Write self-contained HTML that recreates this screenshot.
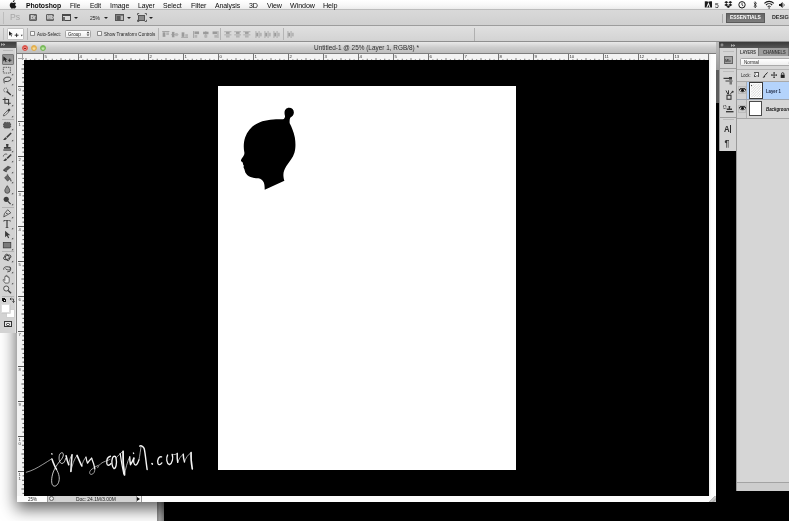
<!DOCTYPE html>
<html><head><meta charset="utf-8"><title>Photoshop</title>
<style>
*{box-sizing:border-box;margin:0;padding:0}
html,body{width:789px;height:521px;overflow:hidden;background:#000;font-family:"Liberation Sans",sans-serif;}
.abs,#root div,#root span,#root svg{position:absolute}
#root{position:relative;width:789px;height:521px;overflow:hidden;background:#000;will-change:transform}
#menubar{z-index:6;left:0;top:0;width:789px;height:10px;background:linear-gradient(#ffffff,#f8f8f8 55%,#ececec);border-bottom:1px solid #bcbcbc}
#menubar span{top:0px;font-size:8.2px;line-height:9px;color:#0a0a0a;white-space:nowrap;letter-spacing:-0.1px}
#appbar{z-index:6;left:0;top:10px;width:789px;height:16px;background:linear-gradient(#d9d9d9,#d0d0d0);border-bottom:1px solid #9d9d9d}
#optbar{z-index:6;left:0;top:26px;width:789px;height:16px;background:linear-gradient(#e0e0e0,#d3d3d3);border-bottom:1px solid #8f8f8f}
#optbar span{font-size:5.2px;line-height:6px;color:#222;white-space:nowrap;top:31px}
#deskleft{left:0;top:42px;width:160px;height:479px;background:#fff}
#win{left:17px;top:42px;width:698.6px;height:460px;background:#000;box-shadow:0 6px 15px 1px rgba(0,0,0,.62)}
#title{left:0;top:0;width:698.6px;height:11.5px;background:linear-gradient(#e9e9e9,#cdcdcd 50%,#bdbdbd);border-bottom:1px solid #7d7d7d}
#title span{left:0;width:700px;text-align:center;top:2.2px;font-size:6.3px;line-height:7px;color:#333}
#hruler{left:0;top:11.5px;width:692px;height:6.5px;background-color:#f3f3f3}
#vruler{left:0;top:18px;width:7px;height:435.5px;background-color:#f3f3f3}
#corner{left:1px;top:11.5px;width:6px;height:6.5px;background:#f3f3f3}
#canvas{left:7px;top:18px;width:685px;height:435.5px;background:#000}
#doc{left:194px;top:26px;width:298px;height:384.4px;background:#fff}
#vscroll{left:692px;top:11.5px;width:6.6px;height:448.5px;background:linear-gradient(90deg,#eee,#fdfdfd 30%,#fff)}
#status{left:0;top:453.5px;width:698.6px;height:6.5px;background:#fcfcfc}
#status span{font-size:4.8px;line-height:6px;top:0.6px;color:#222;white-space:nowrap}
#tools{z-index:5;left:0;top:42px;width:16.3px;height:291px;background:#d3d3d3;border-right:1px solid #e2e2e2;box-shadow:1px 0 0 #808080}
#toolshead{left:0;top:0;width:16.3px;height:5.5px;background:linear-gradient(#3c3c3c,#585858)}
#rpanel{z-index:5;left:718.6px;top:42.4px;width:71px;height:449px;}
#rhead{left:0;top:0;width:71px;height:5.6px;background:linear-gradient(#3a3a3a,#565656)}
#icons{left:0;top:5.6px;width:17px;height:103px;background:#d4d4d4;border-left:1px solid #9c9c9c}
#layers{left:17.4px;top:5.6px;width:54px;height:443.4px;background:#d6d6d6;border-left:1px solid #9a9a9a}
.sep{background:#a8a8a8;height:1px}
</style></head><body>
<div id="root">
<div id="deskleft"></div>
<div style="left:157px;top:502px;width:7px;height:19px;background:linear-gradient(90deg,#8a8a8a,#a5a5a5 40%,#7c7c7c)"></div>
<div id="menubar">
<svg style="left:9.3px;top:0.2px" width="8" height="9.4" viewBox="0 0 16 19"><path fill="#1a1a1a" d="M11.2 0.2c0.1 1-0.3 2-0.9 2.7-0.6 0.8-1.6 1.3-2.6 1.300-0.100-1 0.400-2 0.900-2.600 0.700-0.800 1.800-1.300 2.600-1.400zM14.300 6.500c-0.200 0.100-1.900 1.100-1.900 3.200 0 2.500 2.200 3.400 2.200 3.400 0 0.100-0.300 1.200-1.100 2.300-0.700 1-1.400 2-2.500 2-1.100 0-1.400-0.600-2.700-0.600-1.200 0-1.600 0.600-2.600 0.700-1.100 0-1.900-1.100-2.600-2.100C1.700 13.400 0.600 9.900 2.100 7.400c0.700-1.300 2-2 3.400-2.100 1.100 0 2.100 0.700 2.700 0.700 0.600 0 1.900-0.900 3.200-0.800 0.500 0 2.100 0.200 3 1.600z"/></svg>
<span style="left:26.00px;top:1.00px;font-size:8.10px;line-height:9.10px;white-space:nowrap;transform-origin:0 0;transform:scaleX(0.846);color:#0a0a0a;font-weight:bold;">Photoshop</span>
<span style="left:70.30px;top:1.00px;font-size:8.10px;line-height:9.10px;white-space:nowrap;transform-origin:0 0;transform:scaleX(0.814);color:#0a0a0a;">File</span>
<span style="left:89.60px;top:1.00px;font-size:8.10px;line-height:9.10px;white-space:nowrap;transform-origin:0 0;transform:scaleX(0.812);color:#0a0a0a;">Edit</span>
<span style="left:110.00px;top:1.00px;font-size:8.10px;line-height:9.10px;white-space:nowrap;transform-origin:0 0;transform:scaleX(0.877);color:#0a0a0a;">Image</span>
<span style="left:138.00px;top:1.00px;font-size:8.10px;line-height:9.10px;white-space:nowrap;transform-origin:0 0;transform:scaleX(0.846);color:#0a0a0a;">Layer</span>
<span style="left:163.00px;top:1.00px;font-size:8.10px;line-height:9.10px;white-space:nowrap;transform-origin:0 0;transform:scaleX(0.849);color:#0a0a0a;">Select</span>
<span style="left:190.60px;top:1.00px;font-size:8.10px;line-height:9.10px;white-space:nowrap;transform-origin:0 0;transform:scaleX(0.886);color:#0a0a0a;">Filter</span>
<span style="left:215.20px;top:1.00px;font-size:8.10px;line-height:9.10px;white-space:nowrap;transform-origin:0 0;transform:scaleX(0.855);color:#0a0a0a;">Analysis</span>
<span style="left:249.40px;top:1.00px;font-size:8.10px;line-height:9.10px;white-space:nowrap;transform-origin:0 0;transform:scaleX(0.876);color:#0a0a0a;">3D</span>
<span style="left:267.00px;top:1.00px;font-size:8.10px;line-height:9.10px;white-space:nowrap;transform-origin:0 0;transform:scaleX(0.876);color:#0a0a0a;">View</span>
<span style="left:290.00px;top:1.00px;font-size:8.10px;line-height:9.10px;white-space:nowrap;transform-origin:0 0;transform:scaleX(0.880);color:#0a0a0a;">Window</span>
<span style="left:323.30px;top:1.00px;font-size:8.10px;line-height:9.10px;white-space:nowrap;transform-origin:0 0;transform:scaleX(0.892);color:#0a0a0a;">Help</span>
<span style="left:714.80px;top:1.00px;font-size:8.10px;line-height:9.10px;white-space:nowrap;transform-origin:0 0;transform:scaleX(0.840);color:#222;">5</span>
<svg style="left:700px;top:0" width="89" height="10" viewBox="0 0 89 10">
<rect x="4.800" y="1.300" width="7.200" height="6.200" fill="#1a1a1a"/><path d="M6.300 7.500l2.100-5.400 2.100 5.400h-1.100l-1-2.800-1 2.800z" fill="#f4f4f4"/><path d="M6.900 1.300h3l-1.500 0.600z" fill="#f4f4f4"/>
<path fill="#1a1a1a" d="M26.300 1l2 1.300-2 1.300-2-1.300zM30.300 1l2 1.300-2 1.300-2-1.300zM24.300 4.900l2-1.300 2 1.300-2 1.300zM30.300 3.600l2 1.300-2 1.300-2-1.300zM26.300 6.800l2-1.300 2 1.300-2 1.300z"/>
<circle cx="42" cy="4.800" r="3.200" fill="none" stroke="#1a1a1a" stroke-width="1"/><path d="M42 2.800v2.200l1.300 0.900" stroke="#1a1a1a" stroke-width="0.800" fill="none"/>
<path d="M54 2.800l2.400 3.400-1.300 1.700v-6.200l1.300 1.700-2.400 3.400" stroke="#1a1a1a" stroke-width="0.700" fill="none"/>
<path d="M64.400 3.300a6.800 6.800 0 0 1 9.400 0" stroke="#1a1a1a" stroke-width="1.100" fill="none"/><path d="M66 5a4.500 4.500 0 0 1 6.200 0" stroke="#1a1a1a" stroke-width="1.100" fill="none"/><path d="M67.600 6.600a2.300 2.300 0 0 1 3 0" stroke="#1a1a1a" stroke-width="1" fill="none"/><circle cx="69.100" cy="8" r="0.700" fill="#1a1a1a"/>
<path fill="#1a1a1a" d="M79 3.900h1.400l2.200-1.900v6l-2.200-1.900h-1.400z"/><path d="M83.600 3.600a2 2 0 0 1 0 2.800" stroke="#1a1a1a" stroke-width="0.700" fill="none"/>
</svg>
</div>
<div id="appbar">
<div style="left:2.5px;top:2px;width:1px;height:12px;background:#bdbdbd"></div>
<span style="left:9.90px;top:3.30px;font-size:8.60px;line-height:9.60px;white-space:nowrap;transform-origin:0 0;transform:scaleX(1.007);color:#a6a6a6;">Ps</span>
<div style="left:29.2px;top:3.8px;width:8px;height:7.4px;background:#7c7c7c;border:1px solid #5f5f5f;border-radius:1px"></div>
<span style="left:30.7px;top:5px;font-size:4.6px;line-height:5px;color:#e4e4e4;font-weight:bold">Br</span>
<div style="left:45.6px;top:3.8px;width:8px;height:7.4px;background:#7c7c7c;border:1px solid #5f5f5f;border-radius:1px"></div>
<span style="left:47.1px;top:5px;font-size:4.6px;line-height:5px;color:#e4e4e4;font-weight:bold">Mb</span>
<div style="left:62.2px;top:3.9px;width:8.6px;height:7.6px;border:1px solid #4a4a4a;border-top:2.2px solid #4a4a4a;background:#d9d9d9"></div>
<div style="left:63.2px;top:7px;width:2.2px;height:3.5px;background:#6a6a6a"></div>
<div style="left:73.8px;top:7.0px;width:0;height:0;border-left:2.1px solid transparent;border-right:2.1px solid transparent;border-top:2.7px solid #222"></div>
<span style="left:89.80px;top:4.60px;font-size:5.90px;line-height:6.90px;white-space:nowrap;transform-origin:0 0;transform:scaleX(0.848);color:#222;">25%</span>
<div style="left:103.6px;top:7.0px;width:0;height:0;border-left:2.1px solid transparent;border-right:2.1px solid transparent;border-top:2.7px solid #222"></div>
<div style="left:115.2px;top:4px;width:8.6px;height:7.4px;background:#7e7e7e;border:1px solid #555"></div>
<div style="left:117px;top:6px;width:3.4px;height:3.6px;background:#5a5a5a"></div><div style="left:121.200px;top:5.500px;width:1.500px;height:4.500px;background:#bbb"></div>
<div style="left:126.5px;top:7.0px;width:0;height:0;border-left:2.1px solid transparent;border-right:2.1px solid transparent;border-top:2.7px solid #222"></div>
<div style="left:138.2px;top:4.6px;width:7px;height:6px;background:#8a8a8a;border:1px solid #555"></div>
<svg style="left:136.8px;top:3.4px" width="10" height="9" viewBox="0 0 10 9"><path d="M0.500 2.200v-1.700h1.700M7.800 0.500h1.700v1.700M9.500 6.800v1.700h-1.700M2.200 8.500h-1.700v-1.700" stroke="#444" stroke-width="0.800" fill="none"/></svg>
<div style="left:148.8px;top:7.0px;width:0;height:0;border-left:2.1px solid transparent;border-right:2.1px solid transparent;border-top:2.7px solid #222"></div>
<div style="left:722px;top:3.6px;width:1px;height:9px;background:#aaa"></div>
<div style="left:726px;top:3.2px;width:39px;height:9.8px;background:linear-gradient(#646464,#7d7d7d);border:1px solid #5b5b5b"></div>
<span style="left:730.20px;top:5.20px;font-size:4.90px;line-height:5.90px;white-space:nowrap;transform-origin:0 0;transform:scaleX(1.003);color:#fff;font-weight:bold;">ESSENTIALS</span>
<span style="left:772.00px;top:5.20px;font-size:4.90px;line-height:5.90px;white-space:nowrap;transform-origin:0 0;transform:scaleX(1.092);color:#2a2a2a;font-weight:bold;">DESIGN</span>
</div>
<div id="optbar">
<div style="left:2.5px;top:2px;width:1px;height:12px;background:#bdbdbd"></div>
<div style="left:6.5px;top:2.4px;width:17px;height:11.4px;background:#fdfdfd;border:1px solid #c2c2c2;border-radius:1px"></div>
</div>
<div style="left:0;top:0;width:789px;height:42px;z-index:7">
<svg style="left:8px;top:30px" width="16" height="9" viewBox="0 0 16 9"><path d="M1 1.200v4.600l1.300-1.200 0.900 2 0.800-0.400-0.900-1.900h1.800z" fill="#222"/><path d="M6.700 5.200h3.800M8.600 3.300v3.800" stroke="#222" stroke-width="0.900"/><path d="M12.800 4.700h1.900l-0.950 1.700z" fill="#333"/></svg>
<div style="left:27px;top:28px;width:1px;height:12px;background:#b5b5b5"></div>
<div style="left:30.4px;top:31.2px;width:5px;height:5.2px;background:linear-gradient(#fff,#eee);border:0.7px solid #8c8c8c;border-radius:0.8px"></div>
<span style="left:36.50px;top:31.20px;font-size:5.20px;line-height:6.20px;white-space:nowrap;transform-origin:0 0;transform:scaleX(0.849);color:#222;">Auto-Select:</span>
<div style="left:64.6px;top:29.8px;width:26.6px;height:8px;background:linear-gradient(#fff,#ededed);border:0.8px solid #a6a6a6;border-radius:1.5px"></div>
<span style="left:67.80px;top:31.00px;font-size:5.20px;line-height:6.20px;white-space:nowrap;transform-origin:0 0;transform:scaleX(0.894);color:#222;">Group</span>
<svg style="left:85.6px;top:31.2px" width="4" height="6" viewBox="0 0 4 6"><path d="M0.600 2.200l1.400-1.700 1.400 1.700zM0.600 3.400l1.400 1.700 1.400-1.700z" fill="#333"/></svg>
<div style="left:96.8px;top:31.2px;width:5px;height:5.2px;background:linear-gradient(#fff,#eee);border:0.7px solid #8c8c8c;border-radius:0.8px"></div>
<span style="left:103.80px;top:31.20px;font-size:5.20px;line-height:6.20px;white-space:nowrap;transform-origin:0 0;transform:scaleX(0.876);color:#222;">Show Transform Controls</span>
<div style="left:158.4px;top:28px;width:1px;height:12px;background:#b5b5b5"></div>
<svg style="left:162.0px;top:30.8px" width="7.600" height="7.200" viewBox="0 0 8 8"><path d="M0 0.500h8" stroke="#9b9b9b"/><rect x="0.500" y="1.500" width="3" height="5" fill="#9b9b9b"/><rect x="4.500" y="1.500" width="3" height="3" fill="#b4b4b4"/></svg>
<svg style="left:171.3px;top:30.8px" width="7.600" height="7.200" viewBox="0 0 8 8"><path d="M0 4h8" stroke="#9b9b9b" stroke-width="0.800"/><rect x="0.800" y="1" width="2.800" height="6" fill="#9b9b9b"/><rect x="4.500" y="2.300" width="2.800" height="3.400" fill="#b4b4b4"/></svg>
<svg style="left:180.5px;top:30.8px" width="7.600" height="7.200" viewBox="0 0 8 8"><path d="M0 7.500h8" stroke="#9b9b9b"/><rect x="0.500" y="1.500" width="3" height="5" fill="#9b9b9b"/><rect x="4.500" y="3.500" width="3" height="3" fill="#b4b4b4"/></svg>
<svg style="left:192.5px;top:30.8px" width="7.600" height="7.200" viewBox="0 0 8 8"><path d="M0.500 0v8" stroke="#9b9b9b"/><rect x="1.500" y="0.500" width="5" height="3" fill="#9b9b9b"/><rect x="1.500" y="4.500" width="3" height="3" fill="#b4b4b4"/></svg>
<svg style="left:201.8px;top:30.8px" width="7.600" height="7.200" viewBox="0 0 8 8"><path d="M4 0v8" stroke="#9b9b9b" stroke-width="0.800"/><rect x="1" y="0.800" width="6" height="2.800" fill="#9b9b9b"/><rect x="2.300" y="4.500" width="3.400" height="2.800" fill="#b4b4b4"/></svg>
<svg style="left:211.2px;top:30.8px" width="7.600" height="7.200" viewBox="0 0 8 8"><path d="M7.500 0v8" stroke="#9b9b9b"/><rect x="1.500" y="0.500" width="5" height="3" fill="#9b9b9b"/><rect x="3.500" y="4.500" width="3" height="3" fill="#b4b4b4"/></svg>
<div style="left:220.3px;top:28px;width:1px;height:12px;background:#b5b5b5"></div>
<svg style="left:224.4px;top:30.8px" width="7.600" height="7.200" viewBox="0 0 8 8"><path d="M0 0.800h8M0 4.300h8" stroke="#9b9b9b" stroke-width="0.800"/><rect x="2" y="1.200" width="4" height="2" fill="#9b9b9b"/><rect x="2" y="4.800" width="4" height="2.500" fill="#b4b4b4"/></svg>
<svg style="left:233.7px;top:30.8px" width="7.600" height="7.200" viewBox="0 0 8 8"><path d="M0 0.800h8M0 4.300h8" stroke="#9b9b9b" stroke-width="0.800"/><rect x="2" y="1.200" width="4" height="2" fill="#9b9b9b"/><rect x="2" y="4.800" width="4" height="2.500" fill="#b4b4b4"/></svg>
<svg style="left:243.0px;top:30.8px" width="7.600" height="7.200" viewBox="0 0 8 8"><path d="M0 0.800h8M0 4.300h8" stroke="#9b9b9b" stroke-width="0.800"/><rect x="2" y="1.200" width="4" height="2" fill="#9b9b9b"/><rect x="2" y="4.800" width="4" height="2.500" fill="#b4b4b4"/></svg>
<svg style="left:254.5px;top:30.8px" width="7.600" height="7.200" viewBox="0 0 8 8"><path d="M0.800 0v8M4.300 0v8" stroke="#9b9b9b" stroke-width="0.800"/><rect x="1.200" y="2" width="2" height="4" fill="#9b9b9b"/><rect x="4.800" y="2" width="2.500" height="4" fill="#b4b4b4"/></svg>
<svg style="left:263.8px;top:30.8px" width="7.600" height="7.200" viewBox="0 0 8 8"><path d="M0.800 0v8M4.300 0v8" stroke="#9b9b9b" stroke-width="0.800"/><rect x="1.200" y="2" width="2" height="4" fill="#9b9b9b"/><rect x="4.800" y="2" width="2.500" height="4" fill="#b4b4b4"/></svg>
<svg style="left:273.0px;top:30.8px" width="7.600" height="7.200" viewBox="0 0 8 8"><path d="M0.800 0v8M4.300 0v8" stroke="#9b9b9b" stroke-width="0.800"/><rect x="1.200" y="2" width="2" height="4" fill="#9b9b9b"/><rect x="4.800" y="2" width="2.500" height="4" fill="#b4b4b4"/></svg>
<div style="left:283.4px;top:28px;width:1px;height:12px;background:#b5b5b5"></div>
<svg style="left:287.0px;top:30.8px" width="7.600" height="7.200" viewBox="0 0 8 8"><path d="M0.800 0v8M4.300 0v8" stroke="#9b9b9b" stroke-width="0.800"/><rect x="1.200" y="2" width="2" height="4" fill="#9b9b9b"/><rect x="4.800" y="2" width="2.500" height="4" fill="#b4b4b4"/></svg>
<div style="left:474px;top:27.5px;width:1px;height:13px;background:#b0b0b0"></div>
</div>
<div id="win">
<div id="title"></div>
<span style="left:296.70px;top:2.00px;font-size:6.70px;line-height:7.70px;white-space:nowrap;transform-origin:0 0;transform:scaleX(0.960);color:#2c2c2c;">Untitled-1 @ 25% (Layer 1, RGB/8) *</span>
<div style="left:4.65px;top:3.1px;width:6.4px;height:6.4px;border-radius:50%;background:radial-gradient(circle at 50% 70%,#ffb4ac 0,#dc5248 75%);border:0.6px solid #dc5248"></div>
<div style="left:13.86px;top:3.1px;width:6.4px;height:6.4px;border-radius:50%;background:radial-gradient(circle at 50% 70%,#ffeab0 0,#e3ad48 75%);border:0.6px solid #e3ad48"></div>
<div style="left:23.07px;top:3.1px;width:6.4px;height:6.4px;border-radius:50%;background:radial-gradient(circle at 50% 70%,#d6f9be 0,#74b855 75%);border:0.6px solid #74b855"></div>
<div style="left:6.8px;top:5.5px;width:2.2px;height:1.6px;background:#7a1010;border-radius:50%"></div>
<div id="hruler"></div><div id="vruler"></div>
<svg style="left:7px;top:11.5px" width="685" height="6.5" viewBox="0 0 685 6.5"><path d="M2.00 6.5v-2.4M6.38 6.5v-1.2M10.75 6.5v-1.8M15.12 6.5v-1.2M19.50 6.5v-6.5M23.88 6.5v-1.2M28.25 6.5v-1.8M32.62 6.5v-1.2M37.00 6.5v-2.4M41.38 6.5v-1.2M45.75 6.5v-1.8M50.12 6.5v-1.2M54.50 6.5v-6.5M58.88 6.5v-1.2M63.25 6.5v-1.8M67.62 6.5v-1.2M72.00 6.5v-2.4M76.38 6.5v-1.2M80.75 6.5v-1.8M85.12 6.5v-1.2M89.50 6.5v-6.5M93.88 6.5v-1.2M98.25 6.5v-1.8M102.62 6.5v-1.2M107.00 6.5v-2.4M111.38 6.5v-1.2M115.75 6.5v-1.8M120.12 6.5v-1.2M124.50 6.5v-6.5M128.88 6.5v-1.2M133.25 6.5v-1.8M137.62 6.5v-1.2M142.00 6.5v-2.4M146.38 6.5v-1.2M150.75 6.5v-1.8M155.12 6.5v-1.2M159.50 6.5v-6.5M163.88 6.5v-1.2M168.25 6.5v-1.8M172.62 6.5v-1.2M177.00 6.5v-2.4M181.38 6.5v-1.2M185.75 6.5v-1.8M190.12 6.5v-1.2M194.50 6.5v-6.5M198.88 6.5v-1.2M203.25 6.5v-1.8M207.62 6.5v-1.2M212.00 6.5v-2.4M216.38 6.5v-1.2M220.75 6.5v-1.8M225.12 6.5v-1.2M229.50 6.5v-6.5M233.88 6.5v-1.2M238.25 6.5v-1.8M242.62 6.5v-1.2M247.00 6.5v-2.4M251.38 6.5v-1.2M255.75 6.5v-1.8M260.12 6.5v-1.2M264.50 6.5v-6.5M268.88 6.5v-1.2M273.25 6.5v-1.8M277.62 6.5v-1.2M282.00 6.5v-2.4M286.38 6.5v-1.2M290.75 6.5v-1.8M295.12 6.5v-1.2M299.50 6.5v-6.5M303.88 6.5v-1.2M308.25 6.5v-1.8M312.62 6.5v-1.2M317.00 6.5v-2.4M321.38 6.5v-1.2M325.75 6.5v-1.8M330.12 6.5v-1.2M334.50 6.5v-6.5M338.88 6.5v-1.2M343.25 6.5v-1.8M347.62 6.5v-1.2M352.00 6.5v-2.4M356.38 6.5v-1.2M360.75 6.5v-1.8M365.12 6.5v-1.2M369.50 6.5v-6.5M373.88 6.5v-1.2M378.25 6.5v-1.8M382.62 6.5v-1.2M387.00 6.5v-2.4M391.38 6.5v-1.2M395.75 6.5v-1.8M400.12 6.5v-1.2M404.50 6.5v-6.5M408.88 6.5v-1.2M413.25 6.5v-1.8M417.62 6.5v-1.2M422.00 6.5v-2.4M426.38 6.5v-1.2M430.75 6.5v-1.8M435.12 6.5v-1.2M439.50 6.5v-6.5M443.88 6.5v-1.2M448.25 6.5v-1.8M452.62 6.5v-1.2M457.00 6.5v-2.4M461.38 6.5v-1.2M465.75 6.5v-1.8M470.12 6.5v-1.2M474.50 6.5v-6.5M478.88 6.5v-1.2M483.25 6.5v-1.8M487.62 6.5v-1.2M492.00 6.5v-2.4M496.38 6.5v-1.2M500.75 6.5v-1.8M505.12 6.5v-1.2M509.50 6.5v-6.5M513.88 6.5v-1.2M518.25 6.5v-1.8M522.62 6.5v-1.2M527.00 6.5v-2.4M531.38 6.5v-1.2M535.75 6.5v-1.8M540.12 6.5v-1.2M544.50 6.5v-6.5M548.88 6.5v-1.2M553.25 6.5v-1.8M557.62 6.5v-1.2M562.00 6.5v-2.4M566.38 6.5v-1.2M570.75 6.5v-1.8M575.12 6.5v-1.2M579.50 6.5v-6.5M583.88 6.5v-1.2M588.25 6.5v-1.8M592.62 6.5v-1.2M597.00 6.5v-2.4M601.38 6.5v-1.2M605.75 6.5v-1.8M610.12 6.5v-1.2M614.50 6.5v-6.5M618.88 6.5v-1.2M623.25 6.5v-1.8M627.62 6.5v-1.2M632.00 6.5v-2.4M636.38 6.5v-1.2M640.75 6.5v-1.8M645.12 6.5v-1.2M649.50 6.5v-6.5M653.88 6.5v-1.2M658.25 6.5v-1.8M662.62 6.5v-1.2M667.00 6.5v-2.4M671.38 6.5v-1.2M675.75 6.5v-1.8M680.12 6.5v-1.2M684.50 6.5v-6.5" stroke="#555" stroke-width="0.8" fill="none"/>
<text x="20.4" y="4.300" font-size="4.400" font-family="Liberation Sans" fill="#333">5</text>
<text x="55.4" y="4.300" font-size="4.400" font-family="Liberation Sans" fill="#333">4</text>
<text x="90.4" y="4.300" font-size="4.400" font-family="Liberation Sans" fill="#333">3</text>
<text x="125.4" y="4.300" font-size="4.400" font-family="Liberation Sans" fill="#333">2</text>
<text x="160.4" y="4.300" font-size="4.400" font-family="Liberation Sans" fill="#333">1</text>
<text x="195.4" y="4.300" font-size="4.400" font-family="Liberation Sans" fill="#333">0</text>
<text x="230.4" y="4.300" font-size="4.400" font-family="Liberation Sans" fill="#333">1</text>
<text x="265.4" y="4.300" font-size="4.400" font-family="Liberation Sans" fill="#333">2</text>
<text x="300.4" y="4.300" font-size="4.400" font-family="Liberation Sans" fill="#333">3</text>
<text x="335.4" y="4.300" font-size="4.400" font-family="Liberation Sans" fill="#333">4</text>
<text x="370.4" y="4.300" font-size="4.400" font-family="Liberation Sans" fill="#333">5</text>
<text x="405.4" y="4.300" font-size="4.400" font-family="Liberation Sans" fill="#333">6</text>
<text x="440.4" y="4.300" font-size="4.400" font-family="Liberation Sans" fill="#333">7</text>
<text x="475.4" y="4.300" font-size="4.400" font-family="Liberation Sans" fill="#333">8</text>
<text x="510.4" y="4.300" font-size="4.400" font-family="Liberation Sans" fill="#333">9</text>
<text x="545.4" y="4.300" font-size="4.400" font-family="Liberation Sans" fill="#333">10</text>
<text x="580.4" y="4.300" font-size="4.400" font-family="Liberation Sans" fill="#333">11</text>
<text x="615.4" y="4.300" font-size="4.400" font-family="Liberation Sans" fill="#333">12</text>
<text x="650.4" y="4.300" font-size="4.400" font-family="Liberation Sans" fill="#333">13</text>
</svg>
<svg style="left:1px;top:18px" width="6" height="435.5" viewBox="0 0 6 435.5"><path d="M6.0 4.62h-1.5M6.0 9.00h-2.6M6.0 13.38h-1.5M6.0 17.75h-2.0M6.0 22.12h-1.5M6.0 26.50h-6.0M6.0 30.88h-1.5M6.0 35.25h-2.0M6.0 39.62h-1.5M6.0 44.00h-2.6M6.0 48.38h-1.5M6.0 52.75h-2.0M6.0 57.12h-1.5M6.0 61.50h-6.0M6.0 65.88h-1.5M6.0 70.25h-2.0M6.0 74.62h-1.5M6.0 79.00h-2.6M6.0 83.38h-1.5M6.0 87.75h-2.0M6.0 92.12h-1.5M6.0 96.50h-6.0M6.0 100.88h-1.5M6.0 105.25h-2.0M6.0 109.62h-1.5M6.0 114.00h-2.6M6.0 118.38h-1.5M6.0 122.75h-2.0M6.0 127.12h-1.5M6.0 131.50h-6.0M6.0 135.88h-1.5M6.0 140.25h-2.0M6.0 144.62h-1.5M6.0 149.00h-2.6M6.0 153.38h-1.5M6.0 157.75h-2.0M6.0 162.12h-1.5M6.0 166.50h-6.0M6.0 170.88h-1.5M6.0 175.25h-2.0M6.0 179.62h-1.5M6.0 184.00h-2.6M6.0 188.38h-1.5M6.0 192.75h-2.0M6.0 197.12h-1.5M6.0 201.50h-6.0M6.0 205.88h-1.5M6.0 210.25h-2.0M6.0 214.62h-1.5M6.0 219.00h-2.6M6.0 223.38h-1.5M6.0 227.75h-2.0M6.0 232.12h-1.5M6.0 236.50h-6.0M6.0 240.88h-1.5M6.0 245.25h-2.0M6.0 249.62h-1.5M6.0 254.00h-2.6M6.0 258.38h-1.5M6.0 262.75h-2.0M6.0 267.12h-1.5M6.0 271.50h-6.0M6.0 275.88h-1.5M6.0 280.25h-2.0M6.0 284.62h-1.5M6.0 289.00h-2.6M6.0 293.38h-1.5M6.0 297.75h-2.0M6.0 302.12h-1.5M6.0 306.50h-6.0M6.0 310.88h-1.5M6.0 315.25h-2.0M6.0 319.62h-1.5M6.0 324.00h-2.6M6.0 328.38h-1.5M6.0 332.75h-2.0M6.0 337.12h-1.5M6.0 341.50h-6.0M6.0 345.88h-1.5M6.0 350.25h-2.0M6.0 354.62h-1.5M6.0 359.00h-2.6M6.0 363.38h-1.5M6.0 367.75h-2.0M6.0 372.12h-1.5M6.0 376.50h-6.0M6.0 380.88h-1.5M6.0 385.25h-2.0M6.0 389.62h-1.5M6.0 394.00h-2.6M6.0 398.38h-1.5M6.0 402.75h-2.0M6.0 407.12h-1.5M6.0 411.50h-6.0M6.0 415.88h-1.5M6.0 420.25h-2.0M6.0 424.62h-1.5M6.0 429.00h-2.6M6.0 433.38h-1.5" stroke="#444" stroke-width="0.9" fill="none"/>
<text x="0.600" y="31.0" font-size="4.200" font-family="Liberation Sans" fill="#333">0</text>
<text x="0.600" y="66.0" font-size="4.200" font-family="Liberation Sans" fill="#333">1</text>
<text x="0.600" y="101.0" font-size="4.200" font-family="Liberation Sans" fill="#333">2</text>
<text x="0.600" y="136.0" font-size="4.200" font-family="Liberation Sans" fill="#333">3</text>
<text x="0.600" y="171.0" font-size="4.200" font-family="Liberation Sans" fill="#333">4</text>
<text x="0.600" y="206.0" font-size="4.200" font-family="Liberation Sans" fill="#333">5</text>
<text x="0.600" y="241.0" font-size="4.200" font-family="Liberation Sans" fill="#333">6</text>
<text x="0.600" y="276.0" font-size="4.200" font-family="Liberation Sans" fill="#333">7</text>
<text x="0.600" y="311.0" font-size="4.200" font-family="Liberation Sans" fill="#333">8</text>
<text x="0.600" y="346.0" font-size="4.200" font-family="Liberation Sans" fill="#333">9</text>
<text x="0.600" y="381.0" font-size="4.200" font-family="Liberation Sans" fill="#333">1</text>
<text x="0.600" y="385.0" font-size="4.200" font-family="Liberation Sans" fill="#333">0</text>
<text x="0.600" y="416.0" font-size="4.200" font-family="Liberation Sans" fill="#333">1</text>
<text x="0.600" y="420.0" font-size="4.200" font-family="Liberation Sans" fill="#333">1</text>
</svg>
<div style="left:0;top:11.5px;width:7px;height:6.5px;background:#f3f3f3"></div>
<div style="left:0.5px;top:16px;width:6.5px;height:0.8px;background:#a4a4a4"></div><div style="left:5.400px;top:11.500px;width:0.800px;height:6.500px;background:#a4a4a4"></div>
<div id="canvas"><div id="doc"></div>
<svg style="left:211px;top:40px;overflow:visible" width="70" height="95" viewBox="0 0 70 95"><path transform="scale(0.18229)" fill="#000" d="M297,43 C312,43 323,54 323,69 C323,83 313,92 303,98 C299,108 299,118 300,128 C311,150 322,175 328,205 C334,240 332,270 326,290 C318,318 296,342 282,362 C268,385 264,400 266,420 C267,432 269,438 271,443 L163,492 C163,478 162,462 158,452 C153,440 142,432 128,429 C112,429 92,427 76,418 C62,408 56,398 55,392 C54,384 51,378 47,370 C47,365 49,361 47,357 C43,354 42,350 44,345 C42,342 36,340 33,335 C31,329 38,320 44,311 C50,303 53,294 51,285 C46,262 47,232 56,205 C68,172 92,143 125,127 C155,112 200,106 240,106 C252,106 262,106 268,104 C274,98 276,92 273,82 C268,60 278,43 297,43 Z"/></svg>
<svg style="left:0;top:380px;overflow:visible" width="190" height="56" viewBox="0 0 190 56" fill="none" stroke="#f4f4f4" stroke-linecap="round" stroke-linejoin="round">
<g transform="translate(-4,0) scale(0.11407)" stroke-width="9">
<path stroke-width="5.5" d="M55,283 C100,272 150,246 200,214 C230,196 255,180 276,166"/>
<path stroke-width="12" d="M279,120 L281,124"/>
<path stroke-width="13.5" d="M280,166 C292,200 306,235 320,258"/>
<path stroke-width="7" d="M320,258 C345,300 350,340 338,372 C328,398 306,412 290,400 C272,385 274,330 292,280 C304,250 322,218 346,190 C364,170 384,145 380,124 C376,104 352,108 345,135 C338,168 346,204 368,206 C386,206 394,184 400,162"/>
<path stroke-width="13.5" d="M404,138 C410,165 418,195 427,217"/>
<path stroke-width="5.5" d="M427,217 C430,185 440,150 456,130"/>
<path stroke-width="13.5" d="M456,130 C452,175 448,230 446,276"/>
<path stroke-width="5.5" d="M446,276 C455,225 475,165 500,135"/>
<path stroke-width="13.5" d="M500,135 C515,170 530,205 542,228"/>
<path stroke-width="5.5" d="M542,228 C548,200 560,170 578,150"/>
<path stroke-width="11" d="M578,150 C582,170 586,190 592,203 C600,190 612,175 628,160"/>
<path stroke-width="11" d="M628,160 C640,190 652,225 656,252"/>
<path stroke-width="5.5" d="M656,252 C658,280 645,300 625,302 C606,300 606,280 622,262 C640,245 665,232 685,222 "/>
<path stroke-width="5.5" d="M680,243 C690,215 720,195 750,186 C765,181 778,176 789,170"/>
</g>
<g transform="translate(81,0) scale(0.12041)" stroke-width="9">
<path stroke-width="11" d="M45,135 C25,140 12,165 15,195 C18,215 35,215 50,195"/>
<path stroke-width="11" d="M62,150 C52,180 58,225 75,238 C92,235 100,190 92,150 C88,130 70,130 62,150"/>
<path stroke-width="5.5" d="M92,150 C105,135 125,110 150,95"/>
<path stroke-width="14.5" d="M150,95 C148,150 152,230 162,290"/>
<path stroke-width="10" d="M126,112 C134,170 146,235 156,282"/>
<path stroke-width="5.5" d="M162,290 C170,240 185,180 205,140"/>
<path stroke-width="12" d="M205,140 C206,165 208,190 212,205 C222,190 232,170 240,150"/>
<path stroke-width="11" d="M236,108 L238,112"/>
<path stroke-width="11" d="M240,150 C236,175 240,205 256,208 C268,206 275,185 282,165"/>
<path stroke-width="5.5" d="M282,165 C290,125 296,80 300,48"/>
<path stroke-width="12" d="M288,50 C300,42 315,52 325,70 C335,110 340,180 350,245"/>
<path stroke-width="13.5" d="M390,196 L393,200"/>
<path stroke-width="11" d="M470,140 C448,135 432,160 440,195 C446,212 462,205 472,190"/>
<path stroke-width="11" d="M520,125 C505,150 512,195 535,205 C560,195 568,150 558,120"/>
<path stroke-width="5.5" d="M558,120 C575,125 590,120 600,112"/>
<path stroke-width="12" d="M600,112 C598,140 600,165 604,185"/>
<path stroke-width="5.5" d="M604,185 C612,160 630,130 650,118"/>
<path stroke-width="12" d="M650,118 C650,140 655,165 660,182"/>
<path stroke-width="5.5" d="M660,182 C670,150 690,120 715,105"/>
<path stroke-width="13.5" d="M715,105 C712,150 718,200 725,240"/>
</g>
</svg>
</div>
<div id="vscroll"></div>
<div id="status">
<span style="left:10.50px;top:0.20px;font-size:5.30px;line-height:6.30px;white-space:nowrap;transform-origin:0 0;transform:scaleX(0.829);color:#222;">25%</span>
<div style="left:29.5px;top:0;width:9px;height:6.5px;background:#cfcfcf;border-left:0.8px solid #999"></div>
<div style="left:31.6px;top:0.800px;width:5px;height:5px;border:0.8px solid #666;border-radius:50%;background:#e8e8e8"></div>
<div style="left:38.5px;top:0;width:80px;height:6.5px;background:#d2d2d2"></div>
<span style="left:58.50px;top:0.20px;font-size:5.30px;line-height:6.30px;white-space:nowrap;transform-origin:0 0;transform:scaleX(0.920);color:#222;">Doc: 24.1M/3.00M</span>
<div style="left:118.5px;top:0;width:6.5px;height:6.5px;background:#f4f4f4;border-left:0.8px solid #999;border-right:0.8px solid #999"></div>
<div style="left:120.3px;top:1.1px;width:0;height:0;border-top:2.2px solid transparent;border-bottom:2.2px solid transparent;border-left:3.4px solid #111"></div>
<div style="left:692px;top:0;width:6.6px;height:6.5px;background:linear-gradient(135deg,#fcfcfc 45%,#bbb 46%,#ccc 60%,#aaa 75%,#ddd)"></div>
</div>
</div>
<div id="tools"><div id="toolshead"></div>
<svg style="left:1.2px;top:1.4px" width="5" height="3" viewBox="0 0 5 3"><path d="M0.300 0l1.500 1.500-1.500 1.500zM2.500 0l1.500 1.500-1.500 1.500z" fill="#ddd"/></svg>
<div style="left:3px;top:8px;width:10px;height:0.8px;background:#b9b9b9"></div>
<div style="left:1.8px;top:12px;width:12.2px;height:10.6px;background:linear-gradient(#8f8f8f,#a6a6a6);border:0.6px solid #777;border-radius:1px"></div>
<div style="left:2px;top:77.3px;width:12px;height:0.8px;background:#b3b3b3"></div>
<div style="left:2px;top:165.0px;width:12px;height:0.8px;background:#b3b3b3"></div>
<div style="left:2px;top:208.8px;width:12px;height:0.8px;background:#b3b3b3"></div>
<div style="left:2px;top:254.0px;width:12px;height:0.8px;background:#b3b3b3"></div>
<svg style="left:1.62px;top:13.30px;overflow:visible" width="10.56" height="8.80" viewBox="0 0 12 10"><path d="M1.500 1.500v5.800l1.600-1.500 1.100 2.500 1-0.500-1.100-2.400h2.200z" fill="#222"/><path d="M6.800 6h4M8.800 4v4" stroke="#222" stroke-width="1"/></svg>
<svg style="left:1.62px;top:23.90px;overflow:visible" width="10.56" height="8.80" viewBox="0 0 12 10"><rect x="1.500" y="1.500" width="8" height="6.500" fill="none" stroke="#3c3c3c" stroke-width="0.900" stroke-dasharray="1.600 1"/><path d="M10.800 10.600h1.900v-1.900z" fill="#333"/></svg>
<svg style="left:1.62px;top:34.20px;overflow:visible" width="10.56" height="8.80" viewBox="0 0 12 10"><ellipse cx="6" cy="3.800" rx="4.200" ry="2.500" fill="none" stroke="#3c3c3c" stroke-width="1" transform="rotate(-12 6 4)"/><path d="M2.600 5.500c-0.800 1-0.200 2.500 0.600 3" stroke="#3c3c3c" stroke-width="0.900" fill="none"/><path d="M10.800 10.600h1.900v-1.900z" fill="#333"/></svg>
<svg style="left:1.62px;top:44.80px;overflow:visible" width="10.56" height="8.80" viewBox="0 0 12 10"><circle cx="4.200" cy="3.500" r="2.300" fill="none" stroke="#3c3c3c" stroke-width="0.800" stroke-dasharray="1.200 0.800"/><path d="M5.500 5l4.500 4" stroke="#3c3c3c" stroke-width="1.600"/><path d="M10.800 10.600h1.900v-1.900z" fill="#333"/></svg>
<svg style="left:1.62px;top:55.10px;overflow:visible" width="10.56" height="8.80" viewBox="0 0 12 10"><path d="M3.300 0.500v6.700h6.700M0.800 2.800h6.700v6.700" stroke="#3c3c3c" stroke-width="1.200" fill="none"/><path d="M10.800 10.600h1.900v-1.900z" fill="#333"/></svg>
<svg style="left:1.62px;top:66.10px;overflow:visible" width="10.56" height="8.80" viewBox="0 0 12 10"><path d="M1.500 9l0.600-2 4-4 1.500 1.500-4 4z" fill="none" stroke="#3c3c3c" stroke-width="0.800"/><path d="M6 2.500l2-2 1.800 1.800-2 2z" fill="#3c3c3c"/><path d="M10.800 10.600h1.900v-1.900z" fill="#333"/></svg>
<svg style="left:1.62px;top:79.00px;overflow:visible" width="10.56" height="8.80" viewBox="0 0 12 10"><rect x="1.800" y="1.600" width="8" height="6.400" rx="1.800" fill="#5a5a5a" stroke="#3c3c3c" stroke-width="0.900" stroke-dasharray="1.500 0.800"/><path d="M10.800 10.600h1.900v-1.900z" fill="#333"/></svg>
<svg style="left:1.62px;top:90.10px;overflow:visible" width="10.56" height="8.80" viewBox="0 0 12 10"><path d="M9.800 0.500l-5 5 1.200 1.200 5-5z" fill="#3c3c3c"/><path d="M4.300 6c-1.500 0.300-1.500 2-3.300 3 2.500 0.500 4.300-0.500 4.500-2z" fill="#3c3c3c"/><path d="M10.800 10.600h1.900v-1.900z" fill="#333"/></svg>
<svg style="left:1.62px;top:100.60px;overflow:visible" width="10.56" height="8.80" viewBox="0 0 12 10"><path d="M4.500 1h3l-0.500 3.500h2.800v2h-7.600v-2h2.800z" fill="#3c3c3c"/><rect x="1.500" y="7.300" width="9" height="1.400" fill="#3c3c3c"/><path d="M10.800 10.600h1.900v-1.900z" fill="#333"/></svg>
<svg style="left:1.62px;top:111.10px;overflow:visible" width="10.56" height="8.80" viewBox="0 0 12 10"><path d="M9.800 1l-4.500 4.500 1.200 1.200 4.500-4.500z" fill="#3c3c3c"/><path d="M4.500 6c-1.500 0.300-1.500 2-3.300 3 2.500 0.500 4.300-0.500 4.500-2z" fill="#3c3c3c"/><path d="M1.500 4a3 3 0 0 1 4.500-2.500" stroke="#3c3c3c" stroke-width="0.800" fill="none"/><path d="M10.800 10.600h1.900v-1.900z" fill="#333"/></svg>
<svg style="left:1.62px;top:121.90px;overflow:visible" width="10.56" height="8.80" viewBox="0 0 12 10"><path d="M1.500 6.200l5.200-4.200 3.800 1.800-5.200 4.200z" fill="#555"/><path d="M1.500 6.200v1.500l3.800 1.800v-1.500z" fill="#333"/><path d="M10.800 10.600h1.900v-1.900z" fill="#333"/></svg>
<svg style="left:1.62px;top:132.40px;overflow:visible" width="10.56" height="8.80" viewBox="0 0 12 10"><path d="M3 4.200l3.200-2.800 3.300 3.800-3.200 2.800z" fill="#666" stroke="#3c3c3c" stroke-width="0.800"/><path d="M5.500 0.600c0.800-0.600 1.800 0.200 1.200 1.500" fill="none" stroke="#3c3c3c" stroke-width="0.700"/><path d="M9.600 5.200c1.200 1.400 1.500 2.600 0.800 3.600-1-0.400-1.200-2-0.800-3.600z" fill="#3c3c3c"/><path d="M10.800 10.600h1.900v-1.900z" fill="#333"/></svg>
<svg style="left:1.62px;top:143.00px;overflow:visible" width="10.56" height="8.80" viewBox="0 0 12 10"><path d="M6 0.800c1.800 2.800 2.800 4.100 2.800 5.800a2.800 2.800 0 0 1-5.600 0c0-1.700 1-3 2.800-5.800z" fill="#8a8a8a" stroke="#3c3c3c" stroke-width="0.900"/><path d="M10.800 10.600h1.900v-1.900z" fill="#333"/></svg>
<svg style="left:1.62px;top:153.60px;overflow:visible" width="10.56" height="8.80" viewBox="0 0 12 10"><circle cx="4.800" cy="3.800" r="2.900" fill="#3c3c3c"/><path d="M6.500 5.800l3.300 3.400" stroke="#3c3c3c" stroke-width="1.400"/><path d="M10.800 10.600h1.900v-1.900z" fill="#333"/></svg>
<svg style="left:1.62px;top:166.60px;overflow:visible" width="10.56" height="8.80" viewBox="0 0 12 10"><path d="M6.500 0.800l3.500 3.500-4.500 2.700-3.500 2 0.800-3.800z" fill="none" stroke="#3c3c3c" stroke-width="0.900"/><circle cx="5.500" cy="5" r="0.800" fill="#3c3c3c"/><path d="M10.800 10.600h1.900v-1.900z" fill="#333"/></svg>
<span style="left:3.6px;top:175.8px;font-family:'Liberation Serif',serif;font-size:11.5px;line-height:12px;color:#2a2a2a">T</span>
<svg style="left:1.62px;top:177.60px;overflow:visible" width="10.56" height="8.80" viewBox="0 0 12 10"><path d="M10.800 10.600h1.900v-1.900z" fill="#333"/></svg>
<svg style="left:1.62px;top:187.90px;overflow:visible" width="10.56" height="8.80" viewBox="0 0 12 10"><path d="M3.500 0.800v7.500l2-1.800 1.500 3 1.200-0.600-1.500-3h2.800z" fill="#3c3c3c"/><path d="M10.800 10.600h1.900v-1.900z" fill="#333"/></svg>
<svg style="left:1.62px;top:198.60px;overflow:visible" width="10.56" height="8.80" viewBox="0 0 12 10"><rect x="1.500" y="1.800" width="8.500" height="6" fill="#7a7a7a" stroke="#3c3c3c" stroke-width="0.900"/><path d="M10.800 10.600h1.900v-1.900z" fill="#333"/></svg>
<svg style="left:1.62px;top:211.30px;overflow:visible" width="10.56" height="8.80" viewBox="0 0 12 10"><ellipse cx="6" cy="5" rx="4.500" ry="2.200" fill="none" stroke="#3c3c3c" stroke-width="1" transform="rotate(-20 6 5)"/><ellipse cx="6" cy="5" rx="2.200" ry="4" fill="none" stroke="#3c3c3c" stroke-width="0.900" transform="rotate(-20 6 5)"/><path d="M10.800 10.600h1.900v-1.900z" fill="#333"/></svg>
<svg style="left:1.62px;top:222.10px;overflow:visible" width="10.56" height="8.80" viewBox="0 0 12 10"><path d="M2 6.500a4 3 0 1 1 4 2.500" fill="none" stroke="#3c3c3c" stroke-width="1"/><path d="M8.500 3a3 2 0 1 1-4.500 2" fill="none" stroke="#3c3c3c" stroke-width="0.900"/><path d="M10.800 10.600h1.900v-1.900z" fill="#333"/></svg>
<svg style="left:1.62px;top:232.60px;overflow:visible" width="10.56" height="8.80" viewBox="0 0 12 10"><path d="M3.500 9.200c-1-1.500-2.500-3-2.300-3.800 0.500-0.600 1.300 0 2 0.800v-4.200c0-0.800 1.200-0.800 1.200 0v-1c0-0.800 1.300-0.800 1.300 0v1c0-0.800 1.300-0.800 1.300 0v1c0-0.700 1.200-0.700 1.200 0v4c0 1-0.500 1.700-0.800 2.200z" fill="#e8e8e8" stroke="#3c3c3c" stroke-width="0.800"/><path d="M10.800 10.600h1.900v-1.900z" fill="#333"/></svg>
<svg style="left:1.62px;top:243.20px;overflow:visible" width="10.56" height="8.80" viewBox="0 0 12 10"><circle cx="4.800" cy="4" r="2.900" fill="#e0e0e0" stroke="#3c3c3c" stroke-width="1"/><path d="M7 6.300l3.300 3.200" stroke="#3c3c3c" stroke-width="1.600"/></svg>
<div style="left:1.8px;top:255.5px;width:3px;height:3px;background:#111"></div><div style="left:3.300px;top:257px;width:3px;height:3px;background:#fff;border:0.500px solid #111"></div>
<svg style="left:9px;top:254.5px" width="6" height="6" viewBox="0 0 6 6"><path d="M1 2h3.500v3.500M2.200 0.800l-1.200 1.200 1.200 1.200M3.300 4.300l1.200 1.200 1.200-1.200" stroke="#222" stroke-width="0.700" fill="none"/></svg>
<div style="left:5.8px;top:267.2px;width:9.2px;height:8.8px;background:#fff;border:0.5px solid #cfcfcf"></div>
<div style="left:1.2px;top:262px;width:8.6px;height:9.2px;background:#fff;border:0.5px solid #dcdcdc;box-shadow:0.6px 0.6px 0 #c4c4c4"></div>
<div style="left:3.6px;top:279.4px;width:8.4px;height:6px;border:0.8px solid #333;background:#e6e6e6"></div><div style="left:6px;top:280.600px;width:3.600px;height:3.600px;border:0.700px solid #333;border-radius:50%;background:#fff"></div>
</div>
<div style="left:715.6px;top:42px;width:3.4px;height:28px;background:linear-gradient(#bdbdbd,#9c9c9c)"></div>
<div style="left:715.6px;top:70px;width:3.4px;height:33px;background:#5c5c5c"></div>
<div id="rpanel"><div id="rhead"></div>
<svg style="left:1.8px;top:0.8px" width="4" height="4" viewBox="0 0 4 4"><circle cx="2" cy="2" r="1.400" fill="#9a9a9a"/><circle cx="2" cy="2" r="0.500" fill="#555"/></svg>
<svg style="left:12px;top:1.4px" width="5" height="3" viewBox="0 0 5 3"><path d="M0.300 0l1.500 1.500-1.500 1.500zM2.500 0l1.500 1.500-1.500 1.500z" fill="#ddd"/></svg>
<div id="icons">
<div style="left:3px;top:2.6px;width:11px;height:0.8px;background:#bcbcbc"></div>
<div style="left:0;top:20.2px;width:17px;height:0.8px;background:#9e9e9e"></div>
<div style="left:3px;top:23.0px;width:11px;height:0.8px;background:#bcbcbc"></div>
<div style="left:0;top:68.6px;width:17px;height:0.8px;background:#9e9e9e"></div>
<div style="left:3px;top:71.4px;width:11px;height:0.8px;background:#bcbcbc"></div>
<div style="left:4.4px;top:7.6px;width:8.6px;height:8px;background:#a2a2a2;border:0.8px solid #666;border-top:1.6px solid #6a6a6a"></div><span style="left:5.400px;top:10px;font-size:4.400px;line-height:5px;font-weight:bold;color:#444;transform:scaleX(0.9);transform-origin:0 0">Mb</span>
<svg style="left:3.6px;top:29.4px" width="10" height="8" viewBox="0 0 10 8"><path d="M0.500 1.300h7M2.500 4h7" stroke="#3a3a3a" stroke-width="1.200"/><rect x="6" y="0" width="3" height="2.600" fill="#3a3a3a"/><rect x="6.500" y="4.500" width="2.500" height="3" fill="#777"/></svg>
<svg style="left:4px;top:41.6px" width="10" height="10" viewBox="0 0 10 10"><path d="M2 0.500l2 4M4.500 0.300v4M8.500 1.500l-2.500 3" stroke="#3a3a3a" stroke-width="1"/><circle cx="8.700" cy="1.700" r="1" fill="#3a3a3a"/><rect x="3" y="5.300" width="4" height="4" fill="none" stroke="#3a3a3a" stroke-width="1.100"/></svg>
<svg style="left:3.6px;top:56.8px" width="11" height="9" viewBox="0 0 11 9"><path d="M0.500 0.500h2.500v3h-2.500z" fill="none" stroke="#3a3a3a" stroke-width="0.700" stroke-dasharray="1 0.600"/><path d="M5.500 1h1.800l-0.300 2.500h2v1.500h-5.200v-1.500h2z" fill="#3a3a3a"/><rect x="3" y="6" width="7.500" height="1.400" fill="#3a3a3a"/></svg>
<span style="left:4.2px;top:76.2px;font-size:9.2px;line-height:10px;color:#2a2a2a;font-weight:bold;transform:scaleX(0.85);transform-origin:0 0">A</span><div style="left:10.600px;top:76.600px;width:0.900px;height:8.800px;background:#2a2a2a"></div>
<span style="left:4.8px;top:89.6px;font-size:8.6px;line-height:10px;color:#333;font-weight:bold">¶</span>
</div>
<div id="layers">
<div style="left:0;top:0;width:54px;height:8px;background:#9d9d9d"></div>
<div style="left:0;top:0;width:21.6px;height:8.4px;background:#d6d6d6;border-right:0.8px solid #7a7a7a"></div>
<span style="left:3.20px;top:2.10px;font-size:4.50px;line-height:5.50px;white-space:nowrap;transform-origin:0 0;transform:scaleX(0.885);color:#333;font-weight:bold;">LAYERS</span>
<div style="left:50.6px;top:0;width:0.8px;height:8px;background:#7a7a7a"></div>
<span style="left:25.70px;top:2.10px;font-size:4.50px;line-height:5.50px;white-space:nowrap;transform-origin:0 0;transform:scaleX(0.907);color:#3d3d3d;font-weight:bold;">CHANNELS</span>
<div style="left:2.8px;top:10.4px;width:56px;height:8px;background:linear-gradient(#fff,#efefef);border:0.8px solid #aaa;border-radius:1.5px"></div>
<span style="left:7.00px;top:12.30px;font-size:4.80px;line-height:5.80px;white-space:nowrap;transform-origin:0 0;transform:scaleX(0.963);color:#222;">Normal</span>
<svg style="left:50.8px;top:11.8px" width="4" height="6" viewBox="0 0 4 6"><path d="M0.600 2.200l1.400-1.700 1.400 1.700zM0.600 3.400l1.400 1.700 1.400-1.700z" fill="#333"/></svg>
<div style="left:0;top:20.6px;width:54px;height:0.8px;background:#b4b4b4"></div>
<span style="left:3.80px;top:25.00px;font-size:4.60px;line-height:5.60px;white-space:nowrap;transform-origin:0 0;transform:scaleX(0.865);color:#222;">Lock:</span>
<div style="left:16.6px;top:24px;width:5.2px;height:5.4px;border:0.6px solid #555;background:#f6f6f6"></div><div style="left:17.200px;top:24.600px;width:2px;height:2px;background:#aaa"></div><div style="left:19.200px;top:26.600px;width:2px;height:2px;background:#aaa"></div>
<svg style="left:25px;top:23.8px" width="6.200" height="6.200" viewBox="0 0 7 7"><path d="M6.300 0.500l-3.500 3.800" stroke="#222" stroke-width="1.100"/><path d="M2.800 4.300c-1 0.300-0.800 1.200-2.200 2 1.700 0.300 2.800-0.300 3-1.200z" fill="#222"/></svg>
<svg style="left:33.6px;top:23.8px" width="6.200" height="6.200" viewBox="0 0 7 7"><path d="M3.500 0.300v6.400M0.300 3.500h6.400" stroke="#222" stroke-width="0.800"/><path d="M3.500 0l1.100 1.400h-2.200zM3.500 7l1.100-1.400h-2.200zM0 3.500l1.400-1.100v2.200zM7 3.500l-1.400-1.100v2.200z" fill="#222"/></svg>
<svg style="left:42.8px;top:23.6px" width="5.400" height="6.300" viewBox="0 0 6 7"><rect x="0.800" y="3" width="4.400" height="3.600" fill="#222"/><path d="M1.700 3v-1a1.300 1.300 0 0 1 2.600 0v1" stroke="#222" stroke-width="0.900" fill="none"/></svg>
<div style="left:0;top:33.4px;width:54px;height:0.8px;background:#a9a9a9"></div>
<div style="left:0;top:33.8px;width:10.4px;height:17.4px;background:#d0d0d0;border-right:0.8px solid #b0b0b0"></div>
<div style="left:10.4px;top:33.8px;width:44px;height:17.4px;background:#b4d3fb"></div>
<div style="left:1.2px;top:38.0px;width:8px;height:8px;background:#cdcdcd;border:0.6px solid #bcbcbc"></div>
<svg style="left:2px;top:39.6px" width="7" height="5" viewBox="0 0 7 5"><path d="M0.200 2.300c1.500-2.300 5-2.300 6.600 0-1.500 2-5 2-6.600 0z" fill="#f0f0f0" stroke="#222" stroke-width="0.700"/><circle cx="3.500" cy="2.300" r="1.500" fill="#111"/><path d="M0.200 1.800c1.500-2.200 5-2.200 6.600 0" stroke="#111" stroke-width="1" fill="none"/></svg>
<div style="left:11.8px;top:34.2px;width:14px;height:16.8px;border:0.8px solid #3a3a3a;box-shadow:inset 0 0 0 0.8px #fff;background-color:#fff;background-image:linear-gradient(45deg,#d4d4d4 25%,transparent 25%,transparent 75%,#d4d4d4 75%),linear-gradient(45deg,#d4d4d4 25%,transparent 25%,transparent 75%,#d4d4d4 75%);background-size:2.6px 2.6px;background-position:0 0,1.3px 1.3px"></div>
<div style="left:13.6px;top:36.6px;width:1.6px;height:1.6px;background:#111;border-radius:50%"></div>
<span style="left:29.00px;top:41.20px;font-size:4.80px;line-height:5.80px;white-space:nowrap;transform-origin:0 0;transform:scaleX(0.892);color:#1a2540;font-weight:bold;">Layer 1</span>
<div style="left:0;top:51.2px;width:54px;height:0.8px;background:#9fa6b0"></div>
<div style="left:0;top:52px;width:10.4px;height:18px;background:#d0d0d0;border-right:0.8px solid #b0b0b0"></div>
<div style="left:1.2px;top:56.8px;width:8px;height:8px;background:#cdcdcd;border:0.6px solid #bcbcbc"></div>
<svg style="left:2px;top:58.4px" width="7" height="5" viewBox="0 0 7 5"><path d="M0.200 2.300c1.500-2.300 5-2.300 6.600 0-1.500 2-5 2-6.600 0z" fill="#f0f0f0" stroke="#222" stroke-width="0.700"/><circle cx="3.500" cy="2.300" r="1.500" fill="#111"/><path d="M0.200 1.800c1.500-2.200 5-2.200 6.600 0" stroke="#111" stroke-width="1" fill="none"/></svg>
<div style="left:12.4px;top:53.4px;width:12.4px;height:14.6px;background:#fff;border:0.6px solid #4a4a4a"></div>
<span style="left:29.00px;top:58.80px;font-size:4.70px;line-height:5.70px;white-space:nowrap;transform-origin:0 0;transform:scaleX(0.932);color:#111;font-style:italic;font-weight:bold;">Background</span>
<div style="left:0;top:70px;width:54px;height:0.8px;background:#a6a6a6"></div>
<div style="left:0;top:434px;width:54px;height:0.8px;background:#a3a3a3"></div>
<div style="left:0;top:434.8px;width:54px;height:8.6px;background:#cdcdcd"></div>
</div>
</div>
</div>
</body></html>
